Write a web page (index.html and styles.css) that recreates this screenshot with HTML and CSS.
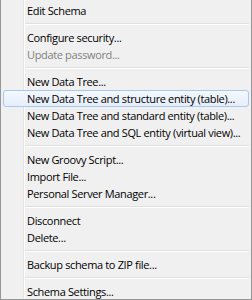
FILE: index.html
```html
<!DOCTYPE html>
<html>
<head>
<meta charset="utf-8">
<link rel="stylesheet" href="styles.css">
</head>
<body>
<div class="menu">
  <div class="item">Edit Schema</div>
  <div class="sep"></div>
  <div class="item">Configure security...</div>
  <div class="item disabled">Update password...</div>
  <div class="sep"></div>
  <div class="item">New Data Tree...</div>
  <div class="item hover">New Data Tree and structure entity (table)...</div>
  <div class="item">New Data Tree and standard entity (table)...</div>
  <div class="item">New Data Tree and SQL entity (virtual view)...</div>
  <div class="sep"></div>
  <div class="item">New Groovy Script...</div>
  <div class="item">Import File...</div>
  <div class="item">Personal Server Manager...</div>
  <div class="sep"></div>
  <div class="item">Disconnect</div>
  <div class="item">Delete...</div>
  <div class="sep"></div>
  <div class="item">Backup schema to ZIP file...</div>
  <div class="sep"></div>
  <div class="item">Schema Settings...</div>
</div>
</body>
</html>
```

FILE: styles.css
```css
html, body {
  margin: 0;
  padding: 0;
  background: #ffffff;
}

.menu {
  box-sizing: border-box;
  width: 252px;
  height: 300px;
  padding-top: 2px;
  border: 1px solid #979797;
  border-top: none;
  background:
    linear-gradient(to right,
      transparent 22px,
      #e2e3e3 22px, #e2e3e3 23px,
      #ffffff 23px, #ffffff 24px,
      transparent 24px),
    #f0f0f0;
  font-family: "Open Sans", "Noto Sans", sans-serif;
  font-size: 11px;
  letter-spacing: -0.35px;
  color: #000;
  overflow: hidden;
}

.item {
  margin: 0 2px;
  height: 17px;
  line-height: 15px;
  box-sizing: border-box;
  border: 1px solid transparent;
  border-radius: 3px;
  padding-left: 23px;
  white-space: nowrap;
}

.item.disabled {
  color: #808080;
}

.item.hover {
  border-color: #a8c8ee;
  background: linear-gradient(to bottom, #f4f8fd, #e5eefa);
}

.sep {
  height: 2px;
  margin: 4px 2px 4px 24px;
  background: linear-gradient(to bottom, #e0e0e0 1px, #ffffff 1px);
}
```
